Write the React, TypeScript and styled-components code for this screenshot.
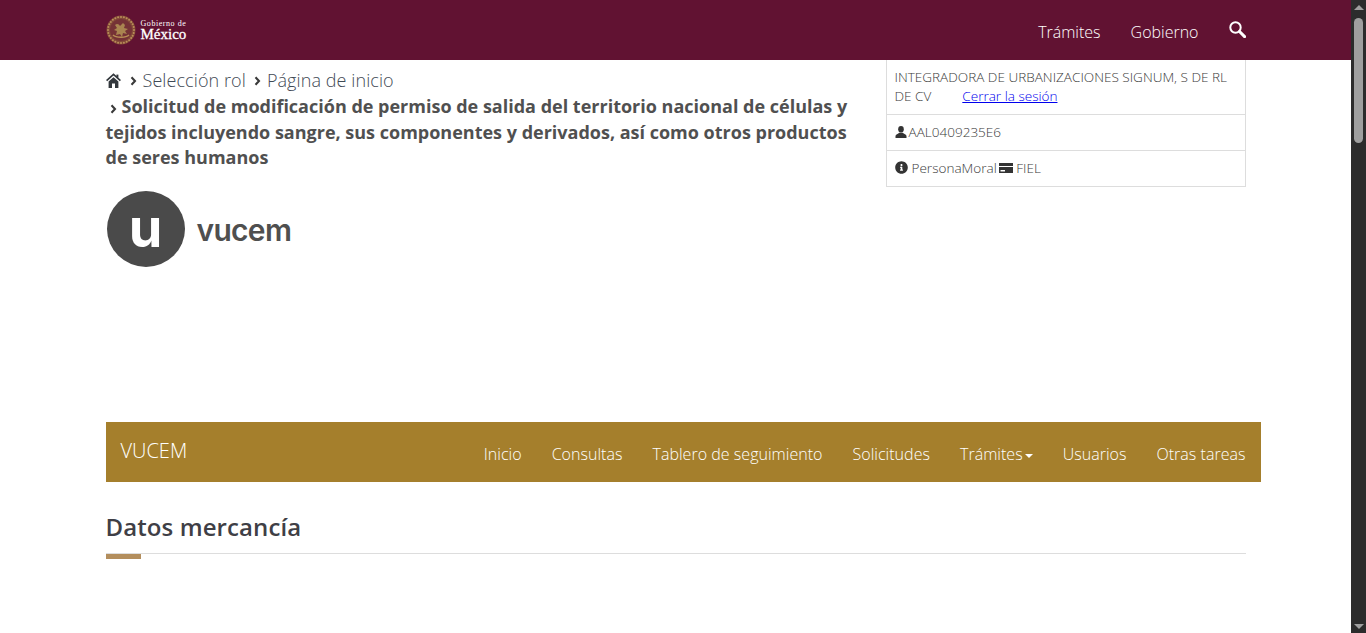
import React from 'react'
import styled, { createGlobalStyle } from 'styled-components'
import { FaInfoCircle } from 'react-icons/fa'

const GlobalStyle = createGlobalStyle`
  html, body {
    margin: 0;
    height: 100%;
    overflow: hidden;
    background: #fff;
  }
  body {
    font-family: "Open Sans", "Noto Sans", sans-serif;
    color: #4a4a4a;
  }
  * { box-sizing: border-box; }
`

const Shell = styled.div`
  display: flex;
  height: 633px;
`

const Page = styled.div`
  flex: 1;
  min-width: 0;
  overflow: hidden;
`

const Scrollbar = styled.div`
  width: 15px;
  background: #2c2c2c;
  display: flex;
  flex-direction: column;
  align-items: center;
  justify-content: space-between;
  padding: 5px 0 4px;
`

const ScrollTrack = styled.div`
  flex: 1;
  width: 100%;
  padding: 8px 3px 0 3px;
`

const ScrollThumb = styled.div`
  height: 125px;
  background: #9f9f9f;
  border-radius: 5px;
`

const ScrollArrow = styled.div<{ $down?: boolean }>`
  width: 0;
  height: 0;
  border-left: 5px solid transparent;
  border-right: 5px solid transparent;
  ${({ $down }) => ($down ? 'border-top: 5px solid #9f9f9f;' : 'border-bottom: 5px solid #9f9f9f;')}
`

const TopBar = styled.header`
  height: 60px;
  background: #611232;
`

const Container = styled.div`
  width: 1170px;
  margin: 0 auto;
  padding: 0 15px;
`

const TopBarInner = styled(Container)`
  height: 60px;
  display: flex;
  align-items: center;
  justify-content: space-between;
`

const Brand = styled.a`
  display: flex;
  align-items: center;
  gap: 5px;
  color: #fff;
`

const BrandText = styled.div`
  display: flex;
  flex-direction: column;
  font-family: "Liberation Serif", serif;
`

const BrandSmall = styled.span`
  font-size: 8px;
  line-height: 8px;
  letter-spacing: 0.55px;
`

const BrandBig = styled.span`
  font-size: 15px;
  line-height: 12px;
  font-weight: 400;
  -webkit-text-stroke: 0.3px #fff;
`

const TopLinks = styled.nav`
  display: flex;
  align-items: center;
  gap: 30px;
  color: #fff;
  font-size: 16px;
  font-weight: 300;
  padding-top: 4px;
`

const SearchGlyph = styled.svg`
  width: 17px;
  height: 17px;
  margin-top: -5px;
`

const Columns = styled(Container)`
  display: grid;
  grid-template-columns: 750px 360px;
  column-gap: 30px;
  height: 362px;
`

const Crumbs = styled.div`
  display: flex;
  align-items: center;
  height: 24px;
  margin-top: 8px;
  font-size: 18px;
  font-weight: 300;
  letter-spacing: 0.08px;
  color: #3f4a55;
`

const HomeGlyph = styled.svg`
  width: 15px;
  height: 15px;
  margin-right: 9px;
`

const ChevronGlyph = styled.svg`
  width: 7px;
  height: 10px;
  margin: 2px 6px 0 0;
  flex: none;
`

const CrumbText = styled.span`
  margin-right: 8px;
`

const Title = styled.h1`
  margin: 2px 0 0;
  font-size: 18px;
  line-height: 25.7px;
  font-weight: 700;
  color: #505050;
  ${ChevronGlyph} {
    margin: 0 5px 0 4px;
    vertical-align: -1px;
  }
`

const VucemLogo = styled.div`
  display: flex;
  align-items: center;
  gap: 12px;
  margin-top: 20px;
  margin-left: 1px;
  height: 76px;
`

const VucemBadge = styled.div`
  width: 78px;
  height: 76px;
  border-radius: 50%;
  background: #4a4a4a;
  color: #fff;
  font-family: "Inter", "Liberation Sans", sans-serif;
  font-size: 54px;
  font-weight: 700;
  line-height: 74px;
  text-align: center;
`

const VucemName = styled.div`
  font-family: "Inter", "Liberation Sans", sans-serif;
  font-size: 30px;
  font-weight: 600;
  letter-spacing: -0.7px;
  padding-top: 1px;
  color: #4f4f4f;
`

const InfoTable = styled.div`
  height: 127px;
  border: 1px solid #ddd;
  border-top: none;
  font-size: 13.55px;
  line-height: 19px;
  font-weight: 300;
  color: #3a3a3a;
`

const InfoRow = styled.div`
  padding: 8px;
  border-bottom: 1px solid #ddd;
  &:last-child { border-bottom: none; }
  svg { vertical-align: -1px; }
`

const InfoLine = styled.div`
  display: flex;
  gap: 31px;
`

const SignOut = styled.a`
  color: #0000ee;
  text-decoration: underline;
`

const InfoIcon = styled.span`
  color: #333;
  margin-right: 2px;
  svg { width: 12px; height: 12px; }
`

const InfoCircleIcon = styled(InfoIcon)`
  margin-right: 4px;
  svg { width: 13px; height: 13px; }
`

const CardIconWrap = styled(InfoIcon)`
  margin-left: -1px;
  margin-right: 3px;
  svg { width: 14px; }
`

const MainNav = styled.nav`
  width: 1155px;
  height: 60px;
  background: #a57f2c;
  color: #fff;
  display: flex;
  align-items: center;
  justify-content: space-between;
  padding: 0 15px;
`

const NavBrand = styled.span`
  font-size: 20px;
  font-weight: 300;
  padding-bottom: 4px;
`

const NavItems = styled.div`
  display: flex;
  gap: 30px;
  font-size: 16px;
  font-weight: 300;
  letter-spacing: 0.03px;
  padding-top: 4px;
`

const NavItem = styled.span`
  display: inline-flex;
  align-items: center;
`

const Caret = styled.span`
  width: 0;
  height: 0;
  margin: 3px 0 0 2px;
  border-left: 4px solid transparent;
  border-right: 4px solid transparent;
  border-top: 4px solid #fff;
`

const SectionTitle = styled.h2`
  margin: 27px 0 0;
  font-size: 24px;
  line-height: 36px;
  font-weight: 600;
  letter-spacing: 0.1px;
  color: #3f3f46;
`

const SectionRule = styled.div`
  position: relative;
  height: 1px;
  margin-top: 8px;
  background: #ddd;
  &::after {
    content: '';
    position: absolute;
    left: 0;
    top: 1px;
    width: 35px;
    height: 5px;
    background: #b38e5d;
  }
`

function Emblem () {
  const dots = Array.from({ length: 28 }, (_, i) => (i / 28) * Math.PI * 2)
  return (
    <svg width='30' height='30' viewBox='0 0 30 30' aria-hidden='true'>
      <circle cx='15' cy='15' r='14.5' fill='#a5803f' opacity='0.5' />
      <circle cx='15' cy='15' r='11' fill='#611232' opacity='0.4' />
      {dots.map((a) => (
        <circle key={a} cx={15 + 13 * Math.cos(a)} cy={15 + 13 * Math.sin(a)} r='1' fill='#b98f58' />
      ))}
      <path d='M9 10c2-2 4-1 5 1l3-3 2 2-1 3 4 1-3 2 2 3-4-1-1 4-2-3-4 1 1-4-3-1 3-2z' fill='#a98450' />
      <path d='M7 20c3 3 13 3 16 0' fill='none' stroke='#b88f55' strokeWidth='1.6' />
    </svg>
  )
}

function Chevron () {
  return (
    <ChevronGlyph viewBox='0 0 7 10' aria-hidden='true'>
      <path d='M1.5 1.2 5 5 1.5 8.8' fill='none' stroke='#3a3a3a' strokeWidth='2.1' />
    </ChevronGlyph>
  )
}

function HomeIcon () {
  return (
    <HomeGlyph viewBox='0 0 15 15' aria-hidden='true'>
      <path d='M0.6 7.6 7.5 1.4l6.9 6.2' fill='none' stroke='#33383d' strokeWidth='1.7' />
      <path d='M10.4 1.6h2v3.2h-2z' fill='#33383d' />
      <path d='M2.6 8.6 7.5 4.2l4.9 4.4V15H9V10.5H6V15H2.6z' fill='#33383d' />
    </HomeGlyph>
  )
}

function SearchIcon () {
  return (
    <SearchGlyph viewBox='0 0 17 17' aria-hidden='true'>
      <circle cx='6.5' cy='6.5' r='5.2' fill='none' stroke='#fff' strokeWidth='2' />
      <path d='M10.5 10.5 15.6 15.6' fill='none' stroke='#fff' strokeWidth='3' strokeLinecap='round' />
    </SearchGlyph>
  )
}

function UserIcon () {
  return (
    <svg viewBox='0 0 12 12' aria-hidden='true'>
      <ellipse cx='6' cy='3.2' rx='2.8' ry='3.2' fill='#333' />
      <path d='M0.5 12V10C0.5 8.4 3.2 8 4.3 6.8h3.4C8.8 8 11.5 8.4 11.5 10v2z' fill='#333' />
    </svg>
  )
}

function CardIcon () {
  return (
    <svg viewBox='0 0 14 12' aria-hidden='true'>
      <path d='M0 1h14v3H0zM0 5h14v6H0z' fill='#333' />
      <path d='M1.5 8h4.5v1.5H1.5z' fill='#fff' />
    </svg>
  )
}

export default function App () {
  return (
    <>
      <GlobalStyle />
      <Shell>
        <Page>
          <TopBar>
            <TopBarInner>
              <Brand>
                <Emblem />
                <BrandText>
                  <BrandSmall>Gobierno de</BrandSmall>
                  <BrandBig>México</BrandBig>
                </BrandText>
              </Brand>
              <TopLinks>
                <span>Trámites</span>
                <span>Gobierno</span>
                <SearchIcon />
              </TopLinks>
            </TopBarInner>
          </TopBar>

          <Columns>
            <div>
              <Crumbs>
                <HomeIcon />
                <Chevron />
                <CrumbText>Selección rol</CrumbText>
                <Chevron />
                <CrumbText>Página de inicio</CrumbText>
              </Crumbs>
              <Title>
                <Chevron />
                Solicitud de modificación de permiso de salida del territorio nacional de células y tejidos incluyendo sangre, sus componentes y derivados, así como otros productos de seres humanos
              </Title>
              <VucemLogo>
                <VucemBadge>u</VucemBadge>
                <VucemName>vucem</VucemName>
              </VucemLogo>
            </div>
            <InfoTable>
              <InfoRow>
                <InfoLine>INTEGRADORA DE URBANIZACIONES SIGNUM, S DE RL</InfoLine>
                <InfoLine>
                  <span>DE CV</span>
                  <SignOut>Cerrar la sesión</SignOut>
                </InfoLine>
              </InfoRow>
              <InfoRow>
                <InfoIcon><UserIcon /></InfoIcon>AAL0409235E6
              </InfoRow>
              <InfoRow>
                <InfoCircleIcon><FaInfoCircle /></InfoCircleIcon>PersonaMoral <CardIconWrap><CardIcon /></CardIconWrap>FIEL
              </InfoRow>
            </InfoTable>
          </Columns>

          <Container>
            <MainNav>
              <NavBrand>VUCEM</NavBrand>
              <NavItems>
                <span>Inicio</span>
                <span>Consultas</span>
                <span>Tablero de seguimiento</span>
                <span>Solicitudes</span>
                <NavItem>Trámites<Caret /></NavItem>
                <span>Usuarios</span>
                <span>Otras tareas</span>
              </NavItems>
            </MainNav>
            <SectionTitle>Datos mercancía</SectionTitle>
            <SectionRule />
          </Container>
        </Page>
        <Scrollbar>
          <ScrollArrow />
          <ScrollTrack><ScrollThumb /></ScrollTrack>
          <ScrollArrow $down />
        </Scrollbar>
      </Shell>
    </>
  )
}
